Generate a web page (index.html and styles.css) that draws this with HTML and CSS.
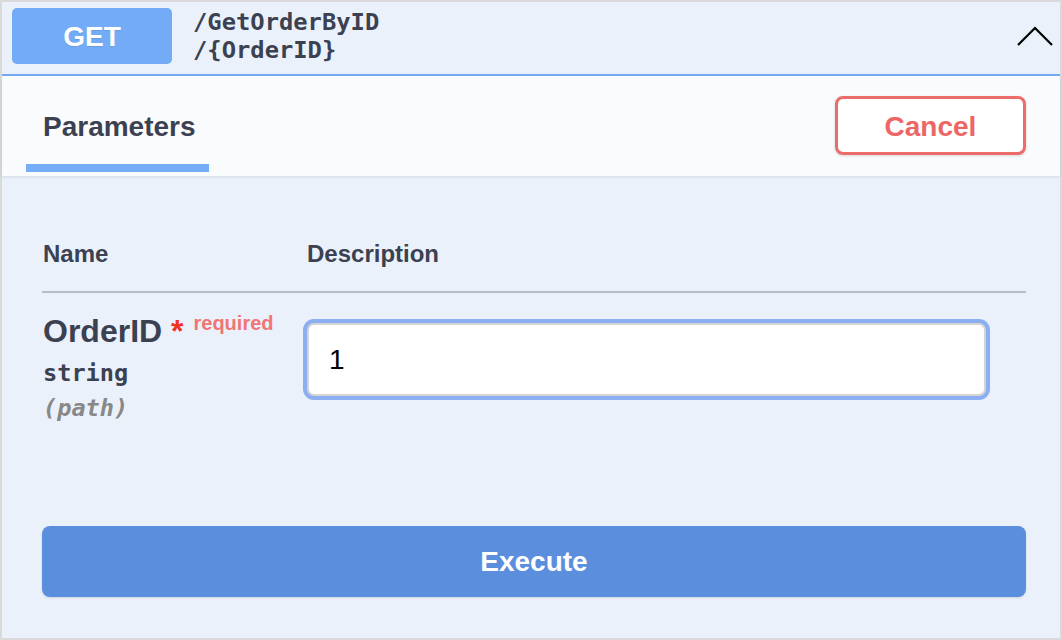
FILE: index.html
```html
<!DOCTYPE html>
<html lang="en">
<head>
<meta charset="utf-8">
<title>GET /GetOrderByID/{OrderID}</title>
<link rel="stylesheet" href="styles.css">
</head>
<body>
<div class="frame">
  <div class="summary">
    <span class="method">GET</span>
    <div class="path"><span>/GetOrderByID</span><span>/{OrderID}</span></div>
    <svg class="chevron" width="36" height="20" viewBox="0 0 36 20" aria-hidden="true">
      <polyline points="1,19 18,2 35,19" fill="none" stroke="#000" stroke-width="2.2" stroke-linejoin="miter"/>
    </svg>
  </div>
  <div class="tabs">
    <div class="tab">Parameters</div>
    <button class="cancel" type="button">Cancel</button>
  </div>
  <div class="body">
    <div class="table">
      <div class="thead">
        <div class="col-name">Name</div>
        <div class="col-desc">Description</div>
      </div>
      <div class="row">
        <div class="col-name">
          <div class="pname">OrderID<span class="star">&nbsp;*</span><span class="req">required</span></div>
          <div class="ptype">string</div>
          <div class="pin">(path)</div>
        </div>
        <div class="col-desc">
          <input class="field" type="text" value="1">
        </div>
      </div>
    </div>
    <button class="execute" type="button">Execute</button>
  </div>
</div>
</body>
</html>
```

FILE: styles.css
```css
* { box-sizing: border-box; }

html, body {
  margin: 0;
  padding: 0;
  background: #ffffff;
}

body {
  font-family: "Liberation Sans", Arial, sans-serif;
  color: #3b4151;
}

.frame {
  width: 1062px;
  height: 640px;
  border: 2px solid #d9d9d9;
  display: flex;
  flex-direction: column;
  background: #ebf1fa;
}

/* ---------- summary bar ---------- */
.summary {
  height: 74px;
  flex: none;
  display: flex;
  align-items: center;
  padding: 6px 7px 10px 10px;
  background: #ebf1fa;
  border-bottom: 2px solid #74abf5;
}

.method {
  width: 160px;
  height: 56px;
  border-radius: 5px;
  background: #73abf7;
  color: #ffffff;
  font-weight: 700;
  font-size: 28px;
  display: flex;
  align-items: center;
  justify-content: center;
  padding-top: 2px;
  text-shadow: 0 1px 0 rgba(0, 0, 0, 0.1);
}

.path {
  margin-left: 21px;
  display: flex;
  flex-direction: column;
  font-family: "DejaVu Sans Mono", "Liberation Mono", monospace;
  font-weight: 700;
  font-size: 23.8px;
  line-height: 28px;
  color: #3b4151;
  flex: 1;
}

.chevron {
  flex: none;
  display: block;
}

/* ---------- tabs ---------- */
.tabs {
  position: relative;
  z-index: 1;
  height: 100px;
  flex: none;
  display: flex;
  justify-content: space-between;
  align-items: flex-start;
  padding: 0 34px 0 24px;
  background: #fafbfd;
  box-shadow: 0 1px 3px rgba(0, 0, 0, 0.1);
}

.tab {
  width: 183px;
  height: 96px;
  padding: 34px 0 0 17px;
  border-bottom: 8px solid #74aef8;
  font-weight: 700;
  font-size: 28px;
  line-height: 34px;
  color: #3b4151;
}

.cancel {
  margin-top: 20px;
  width: 191px;
  height: 59px;
  border: 3px solid #ec6b6b;
  border-radius: 8px;
  background: #ffffff;
  color: #ed6666;
  font-family: "Liberation Sans", Arial, sans-serif;
  font-weight: 700;
  font-size: 28px;
  padding: 2px 0 0;
  box-shadow: 0 1px 3px rgba(0, 0, 0, 0.15);
}

/* ---------- body ---------- */
.body {
  flex: 1;
  padding: 0 34px 0 40px;
  display: flex;
  flex-direction: column;
}

.thead {
  display: flex;
  padding: 64px 0 23px;
  border-bottom: 2px solid #b8bcc5;
  font-weight: 700;
  font-size: 24px;
  line-height: 28px;
  color: #3b4151;
}

.col-name {
  width: 265px;
  flex: none;
  padding-left: 1px;
}

.col-desc {
  flex: 1;
}

.row {
  display: flex;
  padding-top: 20px;
}

.pname {
  font-weight: 700;
  font-size: 32px;
  line-height: 36px;
  color: #3b4151;
  white-space: nowrap;
}

.star {
  color: #f2301f;
}

.req {
  font-size: 20px;
  color: #f07676;
  padding: 0 10px;
  vertical-align: 12px;
  line-height: 20px;
}

.ptype {
  margin-top: 10px;
  font-family: "DejaVu Sans Mono", "Liberation Mono", monospace;
  font-weight: 700;
  font-size: 23.6px;
  line-height: 28px;
  color: #3b4151;
}

.pin {
  margin-top: 7px;
  font-family: "DejaVu Sans Mono", "Liberation Mono", monospace;
  font-weight: 700;
  font-style: italic;
  font-size: 23.6px;
  line-height: 28px;
  color: #888888;
}

.field {
  display: block;
  margin-top: 10px;
  width: 679px;
  height: 73px;
  border: 2px solid #d4d4d4;
  border-radius: 7px;
  background: #ffffff;
  box-shadow: 0 0 0 4px #8caef2;
  padding: 0 0 0 20px;
  font-family: "Liberation Sans", Arial, sans-serif;
  font-size: 28px;
  color: #000000;
  outline: none;
}

.execute {
  margin-top: 104px;
  width: 984px;
  height: 71px;
  border: none;
  border-radius: 8px;
  background: #5b8edd;
  color: #ffffff;
  font-family: "Liberation Sans", Arial, sans-serif;
  font-weight: 700;
  font-size: 28px;
  padding: 0;
  box-shadow: 0 1px 2px rgba(0, 0, 0, 0.12);
}
```
